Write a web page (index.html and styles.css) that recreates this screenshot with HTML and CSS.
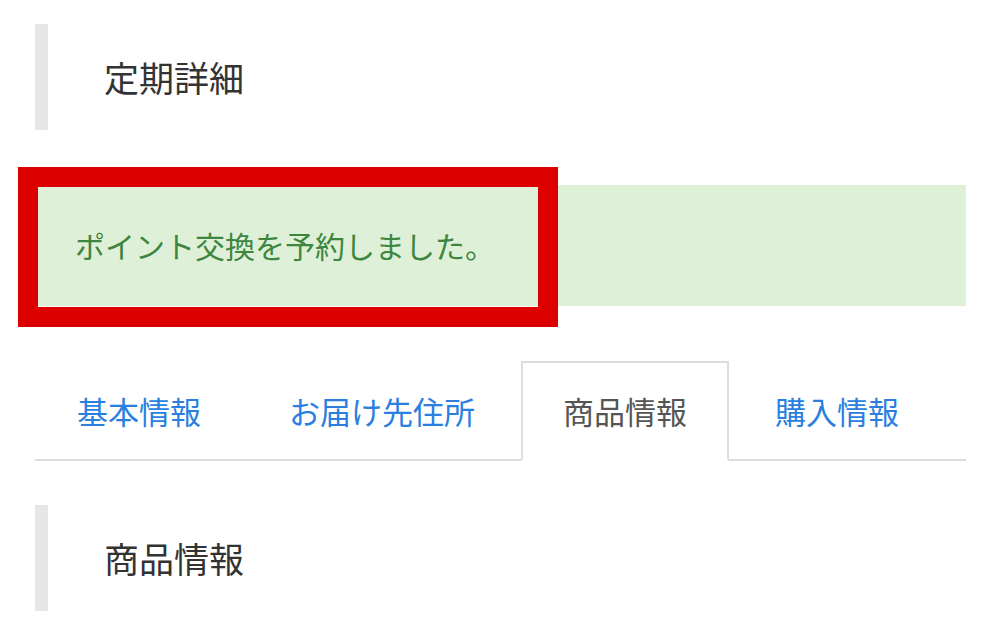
FILE: index.html
```html
<!DOCTYPE html>
<html lang="ja">
<head>
    <meta charset="UTF-8">
    <meta name="viewport" content="width=device-width, initial-scale=1.0">
    <title>定期詳細</title>
    <link rel="stylesheet" href="styles.css">
</head>
<body>
    <div class="page">
        <h2 class="section-title">定期詳細</h2>

        <div class="alert alert-success">
            ポイント交換を予約しました。
            <span class="alert-mark"></span>
        </div>

        <ul class="nav-tabs">
            <li><a href="#">基本情報</a></li>
            <li><a href="#">お届け先住所</a></li>
            <li class="active"><a href="#">商品情報</a></li>
            <li><a href="#">購入情報</a></li>
        </ul>

        <h2 class="section-title section-title--sub">商品情報</h2>
    </div>
</body>
</html>
```

FILE: styles.css
```css
:root {
    --text-color: #333333;
    --link-color: #2a7fe0;
    --border-color: #dddddd;
    --success-bg: #dff0d8;
    --success-text: #3d8640;
    --mark-color: #dd0000;
}

body {
    margin: 0;
    background-color: #ffffff;
    font-family: "Noto Sans CJK JP", "Noto Sans", sans-serif;
    color: var(--text-color);
}

.page {
    padding: 24px 34px 0 35px;
}

.section-title {
    margin: 0;
    height: 106px;
    line-height: 106px;
    padding-left: 56px;
    border-left: 13px solid #e6e6e6;
    font-size: 35px;
    font-weight: normal;
    color: var(--text-color);
}

.section-title--sub {
    margin-top: 44px;
}

.alert {
    position: relative;
    margin-top: 55px;
    height: 121px;
    line-height: 121px;
    padding: 0 40px;
    font-size: 30px;
}

.alert-success {
    background-color: var(--success-bg);
    color: var(--success-text);
}

/* annotation frame drawn over the message */
.alert-mark {
    position: absolute;
    top: -18px;
    left: -17px;
    width: 540px;
    height: 160px;
    box-sizing: border-box;
    border: 20px solid var(--mark-color);
}

.nav-tabs {
    display: flex;
    margin: 55px 0 0 0;
    padding: 0;
    list-style: none;
    border-bottom: 2px solid var(--border-color);
}

.nav-tabs li {
    margin-right: 4px;
    margin-bottom: -2px;
}

.nav-tabs a {
    display: block;
    height: 96px;
    line-height: 96px;
    padding: 0 40px;
    border: 2px solid transparent;
    font-size: 31px;
    color: var(--link-color);
    text-decoration: none;
}

.nav-tabs li.active a {
    color: #555555;
    background-color: #ffffff;
    border-color: var(--border-color);
    border-bottom-color: #ffffff;
}
```
